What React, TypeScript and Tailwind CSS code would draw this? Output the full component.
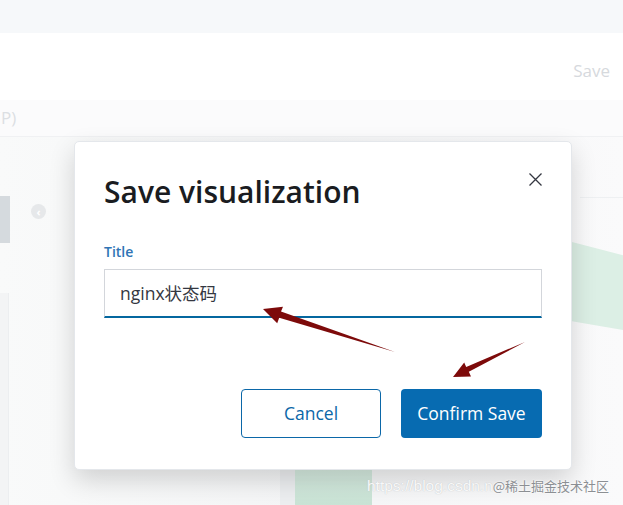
import React from "react";

const sans = { fontFamily: '"Open Sans", "Noto Sans CJK SC", sans-serif' };

function Arrows() {
  return (
    <svg className="absolute left-0 top-0 pointer-events-none" width="623" height="505" viewBox="0 0 623 505">
      <polygon
        points="395,352 279.2,317.8 277.2,323.2 263,309 283.0,306.8 281.0,311.5"
        fill="#7d0a0a"
      />
      <polygon
        points="525,342 468.8,371.8 471,376.5 453,377 464.2,362.5 466.2,366.9"
        fill="#7d0a0a"
      />
    </svg>
  );
}

export default function App() {
  return (
    <div className="relative w-[623px] h-[505px] overflow-hidden bg-[#fbfbfc]" style={sans}>
      {/* background page */}
      <div className="flex flex-col h-full">
        <div className="h-[33px] bg-[#f6f8fa]" />
        <div className="h-[67px] bg-white flex justify-end items-end pb-[18px] pr-[13px]">
          <span className="text-[17px] leading-[22px] text-[#d6d9dd]">Save</span>
        </div>
        <div className="h-[37px] bg-[#fbfbfc] border-b border-[#f0f1f3] flex items-center pl-[1px]">
          <span className="text-[17px] leading-[22px] text-[#dcdfe3]">P)</span>
        </div>
        <div className="flex-1 flex bg-gradient-to-r from-[#f9fafa] via-[#f4f5f6] to-[#fafafb]">
          <div className="w-[60px] flex flex-col">
            <div className="h-[59px]" />
            <div className="flex items-start">
              <div className="w-[10px] h-[47px] bg-[#d5dade]" />
              <div className="ml-[21px] mt-[8px] w-[15px] h-[15px] rounded-full bg-[#e6e8ea] flex items-center justify-center text-white text-[11px] leading-none font-bold">
                ‹
              </div>
            </div>
            <div className="mt-[50px] flex-1 w-[9px] bg-[#f3f4f5] border-r border-[#eceef0]" />
          </div>
          <div className="flex-1" />
        </div>
      </div>

      {/* green chart fragments */}
      <div className="absolute left-[572px] top-[242px] w-[51px] h-[88px] bg-[#dcefe5]" style={{ clipPath: "polygon(0 0, 100% 15%, 100% 100%, 0 90%)" }} />
      <div className="absolute left-[280px] top-[470px] w-[15px] h-[35px] bg-[#eceef0]" />
      <div className="absolute left-[295px] top-[470px] w-[77px] h-[35px] bg-gradient-to-b from-[#d6ebe0] to-[#c9e3d5]" />
      <div className="absolute left-[580px] top-[197px] w-[43px] h-px bg-[#eef0f2]" />

      {/* modal */}
      <div className="absolute left-[74px] top-[141px] w-[498px] h-[329px] bg-white rounded-[5px] border border-[#e4e7eb] shadow-[0_10px_26px_rgba(0,0,0,0.16)] px-[29px] pt-[31px] flex flex-col">
        <button className="absolute right-[29px] top-[30px] w-[14px] h-[14px] flex items-center justify-center">
          <svg width="13" height="13" viewBox="0 0 13 13">
            <path d="M0.5 0.5 L12.5 12.5 M12.5 0.5 L0.5 12.5" stroke="#343741" strokeWidth="1.3" />
          </svg>
        </button>
        <h2 className="text-[30px] leading-[38px] font-semibold text-[#1a1c21]">Save visualization</h2>
        <label className="mt-[31px] text-[14px] leading-[20px] font-semibold text-[#2f74b5]">Title</label>
        <div className="mt-[7px] h-[49px] bg-white border border-[#d3d6db] border-b-[2px] border-b-[#04679f] flex items-center pl-[15px]">
          <span className="text-[17.5px] text-[#343741]" style={{ fontFamily: '"Open Sans", "Noto Sans CJK SC", sans-serif' }}>
            nginx状态码
          </span>
        </div>
        <div className="mt-[71px] flex justify-end gap-[20px]">
          <button className="w-[140px] h-[49px] rounded-[4px] border border-[#0b67a8] text-[#0b67a8] text-[17.5px] bg-white">
            Cancel
          </button>
          <button className="w-[141px] h-[49px] rounded-[4px] bg-[#076bb1] text-white text-[17.5px]">
            Confirm Save
          </button>
        </div>
      </div>

      <Arrows />

      {/* watermark */}
      <div className="absolute left-[367px] top-[476px] flex items-center whitespace-nowrap">
        <span className="text-[15.5px] leading-[20px] text-white/90" style={{ fontFamily: '"Liberation Sans", sans-serif', textShadow: "0 0 1px #b0b4b8" }}>
          https://blog.csdn.n
        </span>
        <span className="text-[13px] leading-[20px] text-[#8c8f93]" style={{ fontFamily: '"Noto Sans CJK SC", sans-serif', textShadow: "0 0 2px #fff, 0 0 2px #fff" }}>
          @稀土掘金技术社区
        </span>
      </div>
    </div>
  );
}
